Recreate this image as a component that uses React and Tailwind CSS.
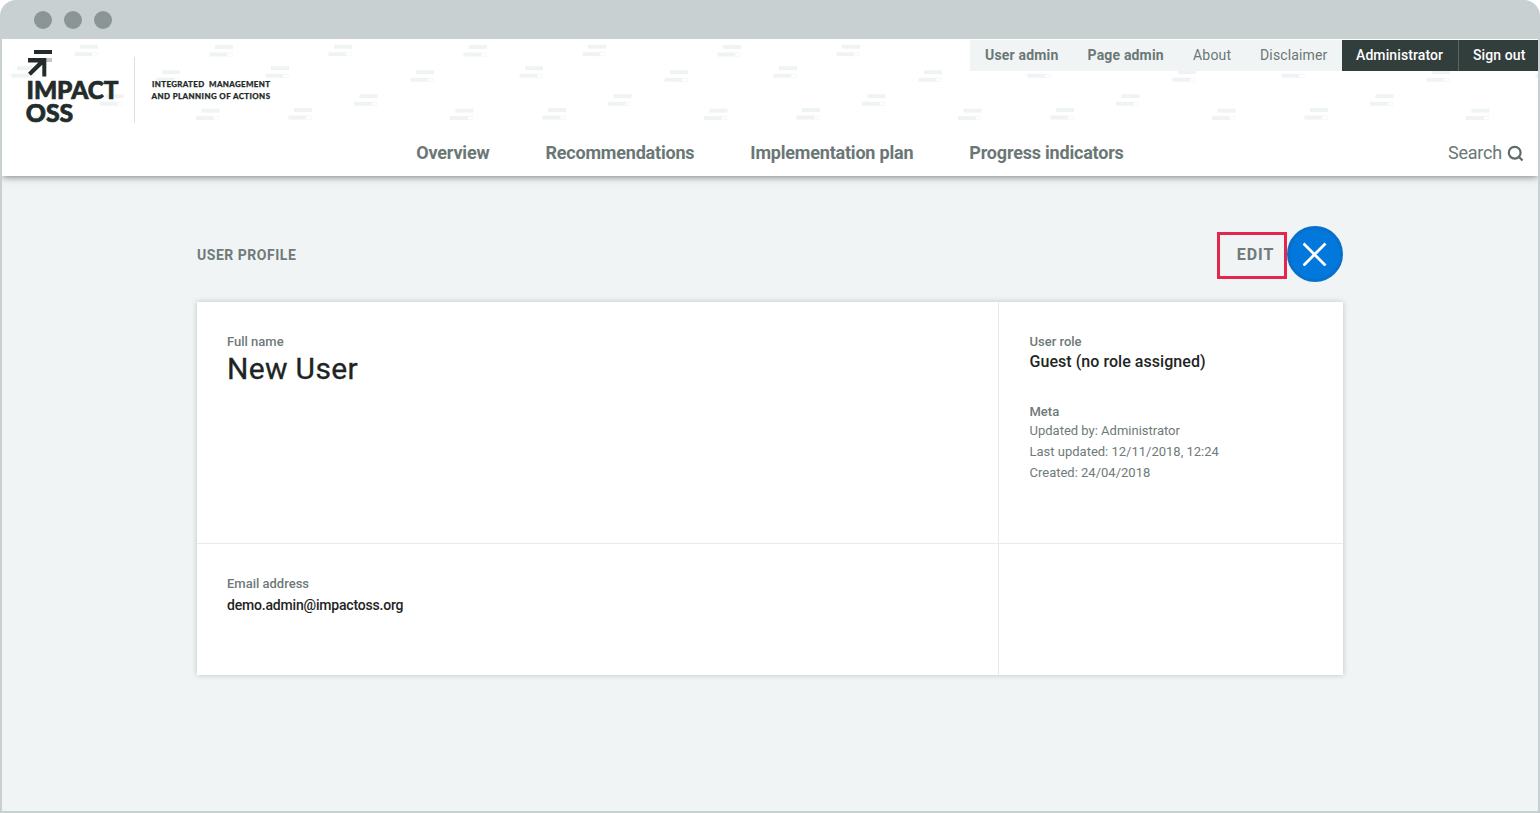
import React from "react";

const MARKS = [
  [72.5, 5.7], [9.5, 27.2], [98, 55.2], [154.5, 31.2], [207.5, 6], [194, 69.6], [32.5, 69],
];

function Mark({ x, y }) {
  return (
    <g>
      <rect x={x + 5.5} y={y} width="18" height="4" fill="#f0f3f4" />
      <rect x={x} y={y + 7.5} width="17.5" height="4" fill="#f0f3f4" />
      <rect x={x + 17.5} y={y + 8} width="5.2" height="3.2" fill="none" stroke="#f3f6f6" strokeWidth="0.8" />
    </g>
  );
}

function Backdrop() {
  return (
    <svg className="absolute inset-0 h-full w-full" aria-hidden="true">
      <defs>
        <pattern id="marks" width="254" height="140" patternUnits="userSpaceOnUse">
          {MARKS.map(([x, y]) => <Mark key={x} x={x} y={y} />)}
        </pattern>
      </defs>
      <rect width="100%" height="100%" fill="url(#marks)" />
    </svg>
  );
}

function Logo() {
  return (
    <svg width="270" height="96" viewBox="0 0 270 96" className="absolute left-0 top-0 font-[Lato]">
      <rect x="32" y="11" width="18" height="4" fill="#232c2a" />
      <rect x="44" y="19" width="6" height="4" fill="#c3c6c6" />
      <path d="M26 19h18.300v18.500h-4V25.700L28.800 36.800l-2.800-3 10.300-10.300H26z" fill="#232c2a" />
      <g fill="#232c2a" stroke="#232c2a" strokeWidth="0.7" fontWeight="900" fontSize="25">
        <text x="24.500" y="59.500" textLength="92" lengthAdjust="spacingAndGlyphs">IMPACT</text>
        <text x="23.800" y="83" textLength="47.500" lengthAdjust="spacingAndGlyphs">OSS</text>
      </g>
      <rect x="132" y="18" width="1" height="66" fill="#dde0e0" />
      <g fill="#232c2a" stroke="#232c2a" strokeWidth="0.25" fontWeight="900" fontSize="7.900">
        <text x="150" y="48.300" textLength="118">INTEGRATED&#160; MANAGEMENT</text>
        <text x="149.500" y="59.500" textLength="118.500">AND PLANNING OF ACTIONS</text>
      </g>
    </svg>
  );
}

function Header() {
  return (
    <header className="relative h-[137px] shrink-0 bg-white shadow-[0_0_8px_rgba(0,0,0,0.6)] [clip-path:inset(0_0_-16px_0)]">
      <Backdrop />
      <Logo />
      <div className="relative flex h-full flex-col justify-between">
        <div className="mt-px flex h-[31px] justify-end text-[14px] leading-[30px]">
          <div className="flex bg-[#f0f4f5] pr-[14.5px] text-[#6b7776]">
            <span className="w-[103px] pl-[15px] font-bold tracking-[0.18px]">User admin</span>
            <span className="w-[105px] pl-[14.6px] font-bold tracking-[0.17px]">Page admin</span>
            <span className="w-[67px] pl-[15px] tracking-[0.2px]">About</span>
            <span className="pl-[15px] tracking-[0.15px]">Disclaimer</span>
          </div>
          <div className="flex bg-[#323e3c] font-medium tracking-[0.1px] text-white">
            <span className="w-[117px] border-r border-[#5a6563] pl-[14px]">Administrator</span>
            <span className="w-[79px] pl-[14px]">Sign out</span>
          </div>
        </div>
        <div className="relative flex h-[48px] items-center justify-center text-[18px] text-[#6b7776]">
          <nav className="flex gap-[56px] font-bold tracking-[-0.2px]">
            <span>Overview</span>
            <span>Recommendations</span>
            <span>Implementation plan</span>
            <span>Progress indicators</span>
          </nav>
          <div className="absolute right-[14px] flex items-center gap-[5px]">
            <span className="tracking-[-0.2px]">Search</span>
            <svg className="mt-[2px]" width="17" height="17" viewBox="0 0 17 17" fill="none" stroke="#5e6b69" strokeWidth="2.200">
              <circle cx="7.700" cy="7.700" r="5.900" />
              <path d="M11.800 11.800 15.500 15.500" />
            </svg>
          </div>
        </div>
      </div>
    </header>
  );
}

function Label({ children }) {
  return <div className="text-[13px] font-medium leading-[18px] text-[#6f7a79]">{children}</div>;
}

export default function App() {
  return (
    <div className="flex h-[813px] w-[1540px] flex-col overflow-hidden rounded-t-[16px] bg-[#c8d0d2] px-[2px] pb-[2px] font-[Roboto,sans-serif]">
      <div className="flex h-[39px] shrink-0 items-center gap-3 pl-8 pt-px">
        <i className="size-[18px] rounded-full bg-[#8c9596]" />
        <i className="size-[18px] rounded-full bg-[#8c9596]" />
        <i className="size-[18px] rounded-full bg-[#8c9596]" />
      </div>
      <div className="flex min-h-0 flex-1 flex-col bg-[#f0f4f5]">
        <Header />
        <main className="mx-auto w-[1146px] pt-[50px]">
          <div className="flex h-[57px] items-center justify-between">
            <h1 className="pt-px text-[14px] font-bold tracking-[0.52px] text-[#6f7a79]">USER PROFILE</h1>
            <div className="flex items-center pr-[0.4px]">
              <button className="mt-[2px] h-[47px] w-[70px] border-[3px] border-[#e3264d] pb-[1px] pl-[8px] text-[16px] font-bold tracking-[1px] text-[#6f7a79]">EDIT</button>
              <button className="mb-[0.4px] flex size-[56px] items-center justify-center rounded-full border-[3px] border-[#0670cb] bg-[#0277dc]">
                <svg width="24" height="24" viewBox="0 0 24 24" stroke="white" strokeWidth="2.800">
                  <path d="M0.500 1.500 22.500 23.500M22.500 1.500 0.500 23.500" />
                </svg>
              </button>
            </div>
          </div>
          <section className="mt-[19px] grid h-[373px] grid-cols-[802px_344px] grid-rows-[242px_131px] bg-white shadow-[0_0_6px_rgba(0,0,0,0.2)]">
            <div className="border-b border-r border-[#e8ebeb] pl-[30px] pt-[31px]">
              <Label>Full name</Label>
              <div className="text-[30px] font-normal leading-[35px] tracking-[0.33px] text-[#1e2423] [-webkit-text-stroke:0.3px_#1e2423]">New User</div>
            </div>
            <div className="border-b border-[#e8ebeb] pl-[30.5px] pt-[31px]">
              <Label>User role</Label>
              <div className="text-[16px] font-medium leading-[22px] tracking-[0.05px] text-[#1e2423]">Guest (no role assigned)</div>
              <div className="mt-[30px]">
                <Label>Meta</Label>
                <div className="-mt-px text-[13px] leading-[21px] text-[#6f7a79]">
                  <div>Updated by: Administrator</div>
                  <div>Last updated: 12/11/2018, 12:24</div>
                  <div>Created: 24/04/2018</div>
                </div>
              </div>
            </div>
            <div className="border-r border-[#e8ebeb] pl-[30px] pt-[31px]">
              <Label>Email address</Label>
              <div className="text-[14px] font-medium leading-[25px] tracking-[-0.19px] text-[#1e2423]">demo.admin@impactoss.org</div>
            </div>
            <div />
          </section>
        </main>
      </div>
    </div>
  );
}
